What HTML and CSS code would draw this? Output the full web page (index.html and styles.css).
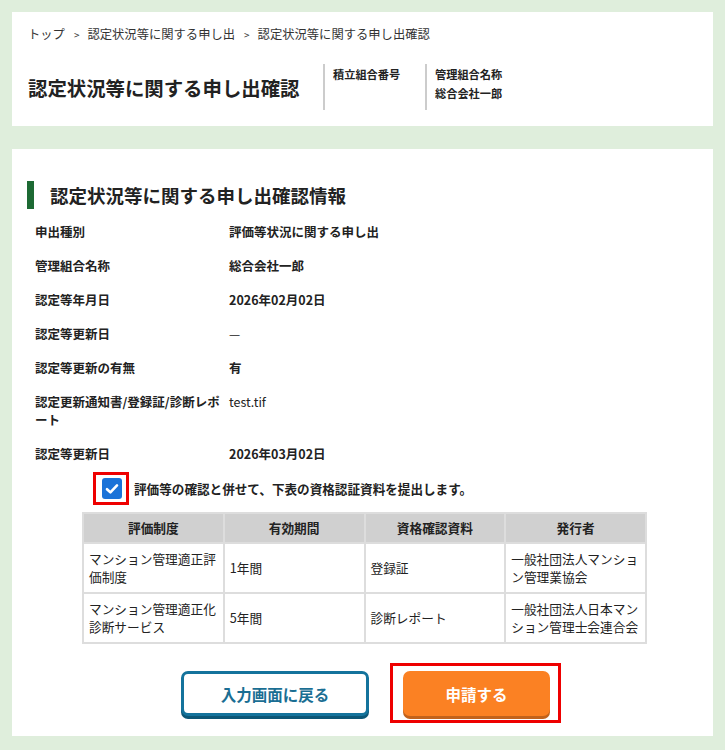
FILE: index.html
```html
<!DOCTYPE html>
<html lang="ja">
  <head>
    <meta charset="UTF-8" />
    <meta name="viewport" content="width=device-width, initial-scale=1.0" />
    <title>認定状況等に関する申し出確認</title>
    <link rel="stylesheet" href="styles.css">
  </head>
  <body>
    <!-- Page header -->
    <div class="card card-top">
      <div class="breadcrumb">
        <span>トップ</span><span class="sep">&gt;</span><span>認定状況等に関する申し出</span><span class="sep">&gt;</span><span>認定状況等に関する申し出確認</span>
      </div>
      <div class="page-head">
        <h1>認定状況等に関する申し出確認</h1>
        <div class="head-info head-info-num">
          <div class="head-label">積立組合番号</div>
        </div>
        <div class="head-info">
          <div class="head-label">管理組合名称</div>
          <div class="head-label">総合会社一郎</div>
        </div>
      </div>
    </div>

    <!-- Confirmation content -->
    <div class="card card-main">
      <h2 class="section-title">認定状況等に関する申し出確認情報</h2>

      <dl class="info-list">
        <div class="info-row">
          <dt>申出種別</dt>
          <dd>評価等状況に関する申し出</dd>
        </div>
        <div class="info-row">
          <dt>管理組合名称</dt>
          <dd>総合会社一郎</dd>
        </div>
        <div class="info-row">
          <dt>認定等年月日</dt>
          <dd>2026年02月02日</dd>
        </div>
        <div class="info-row">
          <dt>認定等更新日</dt>
          <dd class="plain">—</dd>
        </div>
        <div class="info-row">
          <dt>認定等更新の有無</dt>
          <dd>有</dd>
        </div>
        <div class="info-row">
          <dt>認定更新通知書/登録証/診断レポート</dt>
          <dd class="plain">test.tif</dd>
        </div>
        <div class="info-row">
          <dt>認定等更新日</dt>
          <dd>2026年03月02日</dd>
        </div>
      </dl>

      <label class="agree">
        <span class="highlight check-wrap">
          <span class="checkbox">
            <svg width="14" height="12" viewBox="0 0 14 12"><path d="M2 6.2 L5.4 9.4 L12 2.4" fill="none" stroke="#fff" stroke-width="2.6" stroke-linecap="round" stroke-linejoin="round"/></svg>
          </span>
        </span>
        <span class="agree-text">評価等の確認と併せて、下表の資格認証資料を提出します。</span>
      </label>

      <table class="cert-table">
        <thead>
          <tr>
            <th>評価制度</th>
            <th>有効期間</th>
            <th>資格確認資料</th>
            <th>発行者</th>
          </tr>
        </thead>
        <tbody>
          <tr>
            <td>マンション管理適正評価制度</td>
            <td>1年間</td>
            <td>登録証</td>
            <td>一般社団法人マンション管理業協会</td>
          </tr>
          <tr>
            <td>マンション管理適正化診断サービス</td>
            <td>5年間</td>
            <td>診断レポート</td>
            <td>一般社団法人日本マンション管理士会連合会</td>
          </tr>
        </tbody>
      </table>

      <div class="actions">
        <button class="btn btn-back">入力画面に戻る</button>
        <span class="highlight submit-wrap">
          <button class="btn btn-submit">申請する</button>
        </span>
      </div>
    </div>
  </body>
</html>
```

FILE: styles.css
```css
body {
  margin: 0;
  padding: 12px 12px 0;
  background-color: #dfeedc;
  color: #222;
  font-family: "Noto Sans CJK JP", "Noto Sans", sans-serif;
}
.card {
  background-color: #fff;
}

/* Top header card */
.card-top {
  padding: 13px 16px 16px;
}
.breadcrumb {
  font-size: 12.3px;
  line-height: 18px;
  color: #333;
}
.breadcrumb .sep {
  font-size: 10px;
  margin: 0 8px 0 9px;
}
.page-head {
  display: flex;
  margin-top: 20px;
  height: 46px;
}
.page-head h1 {
  margin: 0 22px 0 0;
  font-size: 19.4px;
  font-weight: bold;
  align-self: center;
  width: 273px;
  white-space: nowrap;
}
.head-info {
  border-left: 2px solid #ccc;
  padding: 1px 0 0 8px;
}
.head-info-num {
  width: 92px;
}
.head-label {
  font-size: 11.2px;
  font-weight: bold;
  line-height: 19px;
}

/* Main card */
.card-main {
  margin-top: 23px;
  padding: 32px 15px 13px;
}
.section-title {
  margin: 0;
  border-left: 7px solid #1d6a34;
  padding-left: 16px;
  font-size: 18.5px;
  line-height: 28px;
  font-weight: bold;
}
.info-list {
  margin: 14px 0 0;
  padding-left: 8px;
}
.info-row {
  display: flex;
  margin-bottom: 16px;
  font-size: 12.5px;
  line-height: 18px;
}
.info-row dt {
  width: 188px;
  margin-right: 6px;
  font-weight: bold;
}
.info-row dd {
  margin: 0;
  font-weight: bold;
}
.info-row dd.plain {
  font-weight: normal;
}

/* Checkbox line */
.agree {
  display: flex;
  align-items: center;
  margin: -7px 0 0 66px;
}
.highlight {
  border: 3px solid #ee0000;
}
.check-wrap {
  display: inline-block;
  padding: 3px 4px 3px 6px;
}
.checkbox {
  display: flex;
  align-items: center;
  justify-content: center;
  width: 20px;
  height: 21px;
  border-radius: 3px;
  background-color: #1b73d8;
}
.agree-text {
  margin-left: 5px;
  font-size: 12.6px;
  font-weight: bold;
}

/* Table */
.cert-table {
  margin: 7px 0 0 55px;
  width: 565px;
  border-collapse: collapse;
  table-layout: fixed;
  font-size: 12.7px;
  line-height: 18px;
}
.cert-table th,
.cert-table td {
  border: 2px solid #ddd;
  padding: 6px 5px;
  text-align: left;
}
.cert-table th {
  background-color: #d0d0d0;
  text-align: center;
  font-weight: bold;
  padding: 5px;
}

/* Buttons */
.actions {
  display: flex;
  align-items: flex-start;
  margin-top: 19px;
  padding-left: 154px;
}
.btn {
  font-family: inherit;
  font-size: 15.5px;
  font-weight: bold;
  border-radius: 7px;
  cursor: pointer;
}
.btn-back {
  margin-top: 8px;
  width: 188px;
  height: 45px;
  color: #1a6e93;
  background-color: #fff;
  border: 3px solid #14739c;
  box-shadow: 0 3px 0 #0c5676;
}
.submit-wrap {
  display: inline-block;
  margin-left: 21px;
  padding: 5px 8px 4px 10px;
}
.btn-submit {
  display: block;
  width: 147px;
  height: 45px;
  color: #fff;
  background-color: #fb8123;
  border: none;
  box-shadow: 0 3px 0 #c2621b;
}
```
